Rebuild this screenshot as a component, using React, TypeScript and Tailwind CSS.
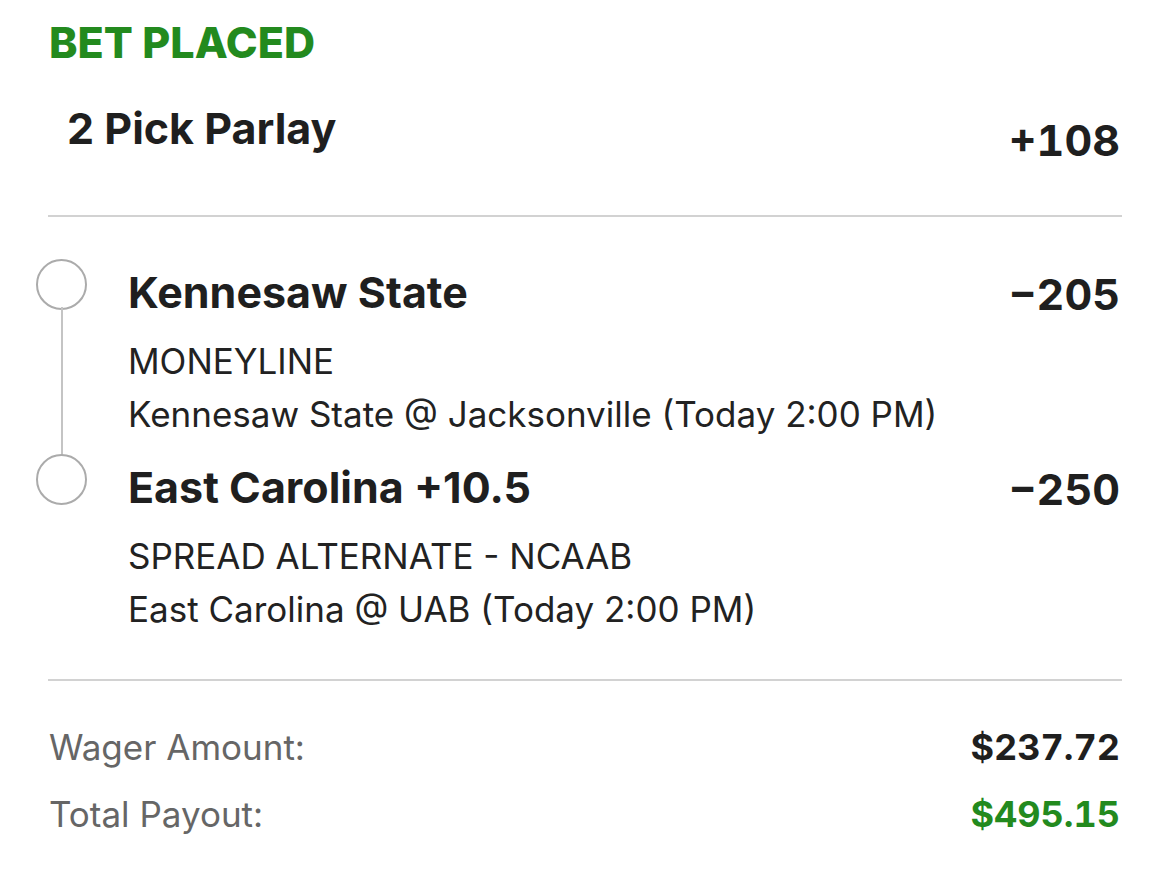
import React from "react";

function Leg({ title, odds, market, game, first, className }: { title: string; odds: string; market: string; game: string; first?: boolean; className?: string }) {
  return (
    <div className={"flex " + (className ?? "")}>
      <div className="relative w-[80px] shrink-0">
        <div className="absolute left-[-12px] top-[-8px] w-[51px] h-[51px] rounded-full border-2 border-[#ababab] bg-white" />
        {first && <div className="absolute left-[13px] top-[40px] bottom-[-14px] w-[2px] bg-[#c4c4c4]" />}
      </div>
      <div className="flex-1">
        <div className="flex justify-between items-start pr-[2px]">
          <div className="text-[43px] font-bold text-[#1f1f1f] leading-[50px]">{title}</div>
          <div className="text-[43px] font-bold text-[#1f1f1f] leading-[50px] mt-[2px] tabular-nums">{odds}</div>
        </div>
        <div className="text-[35px] text-[#222] leading-[53px] mt-[16px]">{market}</div>
        <div className="text-[35px] text-[#222] leading-[53px]">{game}</div>
      </div>
    </div>
  );
}

export default function App() {
  return (
    <div className="w-[1170px] h-[896px] bg-white px-[48px] pt-[17px]" style={{ fontFamily: "Inter, 'Noto Sans', sans-serif" }}>
      <div className="text-[43px] font-extrabold text-[#238a1e] leading-[50px] pl-[1px]">BET PLACED</div>
      <div className="flex justify-between items-start pl-[19px] pr-[2px] mt-[36px]">
        <div className="text-[43px] font-bold text-[#1f1f1f] leading-[50px]">2 Pick Parlay</div>
        <div className="text-[43px] font-bold text-[#1f1f1f] leading-[50px] mt-[12px] tabular-nums">+108</div>
      </div>
      <div className="h-[2px] bg-[#d2d2d2] mt-[50px]" />
      <div className="mt-[50px]">
        <Leg first title="Kennesaw State" odds="−205" market="MONEYLINE" game="Kennesaw State @ Jacksonville (Today 2:00 PM)" />
        <Leg className="mt-[21px]" title="East Carolina +10.5" odds="−250" market="SPREAD ALTERNATE - NCAAB" game="East Carolina @ UAB (Today 2:00 PM)" />
      </div>
      <div className="h-[2px] bg-[#d2d2d2] mt-[43px]" />
      <div className="flex justify-between items-start mt-[39px] pl-[1px] pr-[2px]">
        <div className="text-[35px] text-[#666] leading-[54px]">Wager Amount:</div>
        <div className="text-[36px] font-bold text-[#1f1f1f] leading-[54px] tabular-nums">$237.72</div>
      </div>
      <div className="flex justify-between items-start mt-[13px] pl-[1px] pr-[2px]">
        <div className="text-[35px] text-[#666] leading-[54px]">Total Payout:</div>
        <div className="text-[36px] font-bold text-[#238a1e] leading-[54px] tabular-nums">$495.15</div>
      </div>
    </div>
  );
}
